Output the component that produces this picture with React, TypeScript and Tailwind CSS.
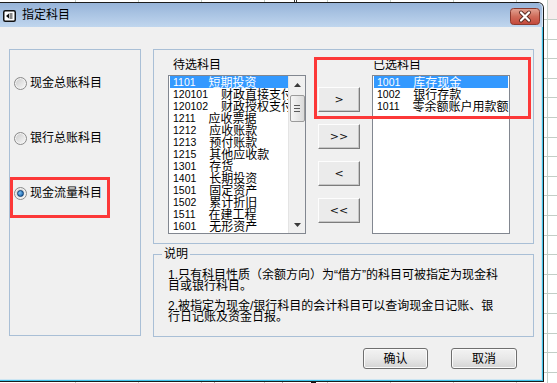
import React from 'react';

const cjk = "font-['Liberation_Sans','Noto_Sans_CJK_SC',sans-serif]";

const leftItems: [string, string][] = [
  ['1101', '短期投资'],
  ['120101', '财政直接支付'],
  ['120102', '财政授权支付'],
  ['1211', '应收票据'],
  ['1212', '应收账款'],
  ['1213', '预付账款'],
  ['1215', '其他应收款'],
  ['1301', '存货'],
  ['1401', '长期投资'],
  ['1501', '固定资产'],
  ['1502', '累计折旧'],
  ['1511', '在建工程'],
  ['1601', '无形资产'],
];

const rightItems: [string, string][] = [
  ['1001', '库存现金'],
  ['1002', '银行存款'],
  ['1011', '零余额账户用款额'],
];

function Row({ code, name, sel }: { code: string; name: string; sel: boolean }) {
  return (
    <div
      className={`ml-[1px] h-[12px] flex items-center whitespace-nowrap pl-[3px] ${
        sel ? 'bg-[#3399ff] text-white' : 'text-black'
      }`}
    >
      <span className="text-[10.5px] leading-[12px] font-['Liberation_Sans',sans-serif]">{code}</span>
      <span className="ml-[13px] text-[12px] leading-[12px] font-['Noto_Sans_CJK_SC',sans-serif]">{name}</span>
    </div>
  );
}

function Radio({ checked, label }: { checked?: boolean; label: string }) {
  return (
    <div className="flex items-center h-[13px] pl-[4px]">
      <div className="relative w-[13px] h-[13px] rounded-full border border-[#8b8b8b] bg-linear-to-br from-[#c9c9c9] to-[#fbfbfb] shadow-[inset_0_0_0_1px_#f4f4f4] flex items-center justify-center">
        {checked && (
          <div className="w-[7px] h-[7px] rounded-full bg-radial-[at_35%_35%] from-[#7cc4f5] to-[#0a4f9c] border border-[#0d3f73]" />
        )}
      </div>
      <span className={`ml-[3px] text-[12px] leading-[13px] text-black ${cjk}`}>{label}</span>
    </div>
  );
}

function MoveBtn({ label }: { label: string }) {
  return (
    <div className="w-[42px] h-[25px] flex items-center justify-center bg-[#ebebeb] border border-t-[#fdfdfd] border-l-[#fdfdfd] border-r-[#7c7c7c] border-b-[#7c7c7c] shadow-[inset_-1px_-1px_0_#c6c6c6] text-[11px] leading-[11px] text-[#111] font-['DejaVu_Sans',sans-serif]">
      {label}
    </div>
  );
}

function DlgBtn({ label }: { label: string }) {
  return (
    <div
      className={`h-[21px] flex items-center justify-center rounded-[3px] border border-[#6f6f6f] bg-linear-to-b from-[#f3f3f3] via-[#e8e8e8] to-[#d4d4d4] shadow-[inset_0_0_0_1px_#fbfbfb] text-[12px] leading-[12px] text-black ${cjk}`}
    >
      {label}
    </div>
  );
}

function Grid() {
  const vx = [75, 138, 201, 264, 327, 390, 453, 516, 547];
  const hy: number[] = [];
  for (let i = 0; i < 20; i++) hy.push(Math.round(19 + i * 19.6));
  return (
    <svg className="absolute inset-0" width="557" height="383">
      <rect x="548" y="0" width="9" height="19" fill="#f6eded" />
      {vx.map((x) => (
        <line key={'v' + x} x1={x + 0.5} y1={0} x2={x + 0.5} y2={383} stroke="#c2cec7" strokeWidth={1} />
      ))}
      <line x1={294.5} y1={0} x2={294.5} y2={4} stroke="#333" />
      <line x1={296.5} y1={0} x2={296.5} y2={4} stroke="#333" />
      <line x1={214.5} y1={380} x2={214.5} y2={383} stroke="#aaa" />
      <line x1={282.5} y1={380} x2={282.5} y2={383} stroke="#aaa" />
      <rect x="311" y="380" width="5" height="3" fill="#111" />
      {hy.map((y) => (
        <line key={'h' + y} x1={544} y1={y + 0.5} x2={557} y2={y + 0.5} stroke="#c2cec7" strokeWidth={1} />
      ))}
    </svg>
  );
}

function Scrollbar() {
  return (
    <div className="w-[17px] bg-[#f0f0f0] border-l border-[#e4e4e4] flex flex-col items-center">
      <div className="h-[17px] w-full flex items-center justify-center">
        <svg width="7" height="4" viewBox="0 0 7 4">
          <path d="M0 4 L3.5 0 L7 4 Z" fill="#3a3a3a" />
        </svg>
      </div>
      <div className="mt-[2px] w-[15px] h-[27px] rounded-[2px] border border-[#9b9b9b] bg-linear-to-r from-[#f6f6f6] to-[#dadada] flex flex-col items-center justify-center gap-[2px]">
        <div className="w-[6px] h-[1px] bg-[#5a5a5a]" />
        <div className="w-[6px] h-[1px] bg-[#5a5a5a]" />
        <div className="w-[6px] h-[1px] bg-[#5a5a5a]" />
      </div>
      <div className="flex-1" />
      <div className="h-[17px] w-full flex items-center justify-center">
        <svg width="7" height="4" viewBox="0 0 7 4">
          <path d="M0 0 L7 0 L3.5 4 Z" fill="#3a3a3a" />
        </svg>
      </div>
    </div>
  );
}

export default function App() {
  return (
    <div className={`relative w-[557px] h-[383px] overflow-hidden bg-white ${cjk}`}>
      <Grid />

      {/* window */}
      <div className="absolute left-0 top-[2px] w-[544px] h-[380px] flex flex-col bg-[#1c1c1c] pt-[1px] pr-[1px] pb-[1px] rounded-tr-[6px] overflow-hidden">
        {/* title bar */}
        <div className="h-[24px] shrink-0 flex items-center justify-between pl-[3px] pr-[3px] bg-linear-to-b from-[#97b4d9] to-[#c0d6ee] rounded-tr-[5px] shadow-[inset_-1px_0_0_#d4e4f4]">
          <div className="flex items-center">
            <svg width="13" height="12" viewBox="0 0 13 12" className="mt-[2px]">
              <rect x="0.75" y="0.75" width="11.5" height="10.5" rx="1.5" fill="#fff" stroke="#111" strokeWidth="1.5" />
              <path d="M3 6 L6 3.5 L6 8.5 Z" fill="#111" />
              <rect x="6.5" y="3.5" width="3" height="1" fill="#111" />
              <rect x="6.5" y="5.5" width="3" height="1" fill="#111" />
              <rect x="6.5" y="7.5" width="3" height="1" fill="#111" />
            </svg>
            <span className={`ml-[6px] text-[12px] leading-[12px] text-black ${cjk}`}>指定科目</span>
          </div>
          <svg width="30" height="17" viewBox="0 0 30 17" className="mt-[3px]">
            <defs>
              <linearGradient id="cb" x1="0" y1="0" x2="0" y2="1">
                <stop offset="0" stopColor="#e3a595" />
                <stop offset="0.5" stopColor="#cf6c5a" />
                <stop offset="1" stopColor="#c4473a" />
              </linearGradient>
            </defs>
            <rect x="0.5" y="0.5" width="29" height="16" rx="3" fill="url(#cb)" stroke="#8c3a2e" />
            <path d="M11 4.5 L19 12.5 M19 4.5 L11 12.5" stroke="#5a2a22" strokeWidth="4" strokeLinecap="round" />
            <path d="M11 4.5 L19 12.5 M19 4.5 L11 12.5" stroke="#fff" strokeWidth="2.2" strokeLinecap="round" />
          </svg>
        </div>

        {/* content */}
        <div className="flex-1 flex flex-col bg-[#f0f0f0] border-r border-b border-[#3ec3ea] shadow-[inset_-1px_-1px_0_#cde6f3] pl-[9px] pt-[22px]">
          <div className="flex gap-[12px]">
            {/* left group */}
            <div className="w-[132px] h-[287px] border border-[#a9bfd6] flex flex-col pt-[27px] gap-[42px]">
              <Radio label="现金总账科目" />
              <Radio label="银行总账科目" />
              <Radio label="现金流量科目" checked />
            </div>

            {/* right column */}
            <div className="w-[381px] flex flex-col">
              <div className="h-[195px] border border-[#a9bfd6] flex pl-[14px] pt-[9px]">
                {/* candidate */}
                <div className="flex flex-col">
                  <div className={`pl-[5px] h-[12px] text-[12px] leading-[12px] text-black ${cjk}`}>待选科目</div>
                  <div className="mt-[4px] w-[138px] h-[159px] border border-[#828790] bg-white flex overflow-hidden">
                    <div className="flex-1 overflow-hidden">
                      {leftItems.map((it, i) => (
                        <Row key={it[0]} code={it[0]} name={it[1]} sel={i === 0} />
                      ))}
                    </div>
                    <Scrollbar />
                  </div>
                </div>

                {/* move buttons */}
                <div className="ml-[12px] pt-[28px] flex flex-col gap-[12px]">
                  <MoveBtn label=">" />
                  <MoveBtn label=">>" />
                  <MoveBtn label="<" />
                  <MoveBtn label="<<" />
                </div>

                {/* selected */}
                <div className="ml-[12px] flex flex-col">
                  <div className={`pl-[1px] h-[12px] text-[12px] leading-[12px] text-black ${cjk}`}>已选科目</div>
                  <div className="mt-[4px] w-[138px] h-[159px] border border-[#828790] bg-white overflow-hidden">
                    <div className="mr-[1px]">
                      {rightItems.map((it, i) => (
                        <Row key={it[0]} code={it[0]} name={it[1]} sel={i === 0} />
                      ))}
                    </div>
                  </div>
                </div>
              </div>

              {/* description */}
              <div className="relative mt-[10px] h-[83px] border border-[#a9bfd6] pl-[14px] pt-[15px]">
                <span className={`absolute left-[8px] top-[-7px] px-[2px] bg-[#f0f0f0] text-[12px] leading-[12px] text-black ${cjk}`}>
                  说明
                </span>
                <div className={`text-[12px] leading-[11px] text-black whitespace-nowrap ${cjk}`}>
                  <div>1.只有科目性质（余额方向）为“借方”的科目可被指定为现金科</div>
                  <div>目或银行科目。</div>
                  <div className="mt-[9px]">2.被指定为现金/银行科目的会计科目可以查询现金日记账、银</div>
                  <div>行日记账及资金日报。</div>
                </div>
              </div>
            </div>
          </div>

          {/* bottom buttons */}
          <div className="mt-[11px] flex justify-end gap-[23px] pr-[25px]">
            <div className="w-[65px]">
              <DlgBtn label="确认" />
            </div>
            <div className="w-[66px]">
              <DlgBtn label="取消" />
            </div>
          </div>
        </div>
      </div>

      {/* red annotation boxes */}
      <div className="absolute left-[10px] top-[177px] w-[100px] h-[41px] border-[3px] border-[#fc3838]" />
      <div className="absolute left-[314px] top-[57px] w-[217px] h-[62px] border-[3px] border-[#fc3838]" />
    </div>
  );
}
